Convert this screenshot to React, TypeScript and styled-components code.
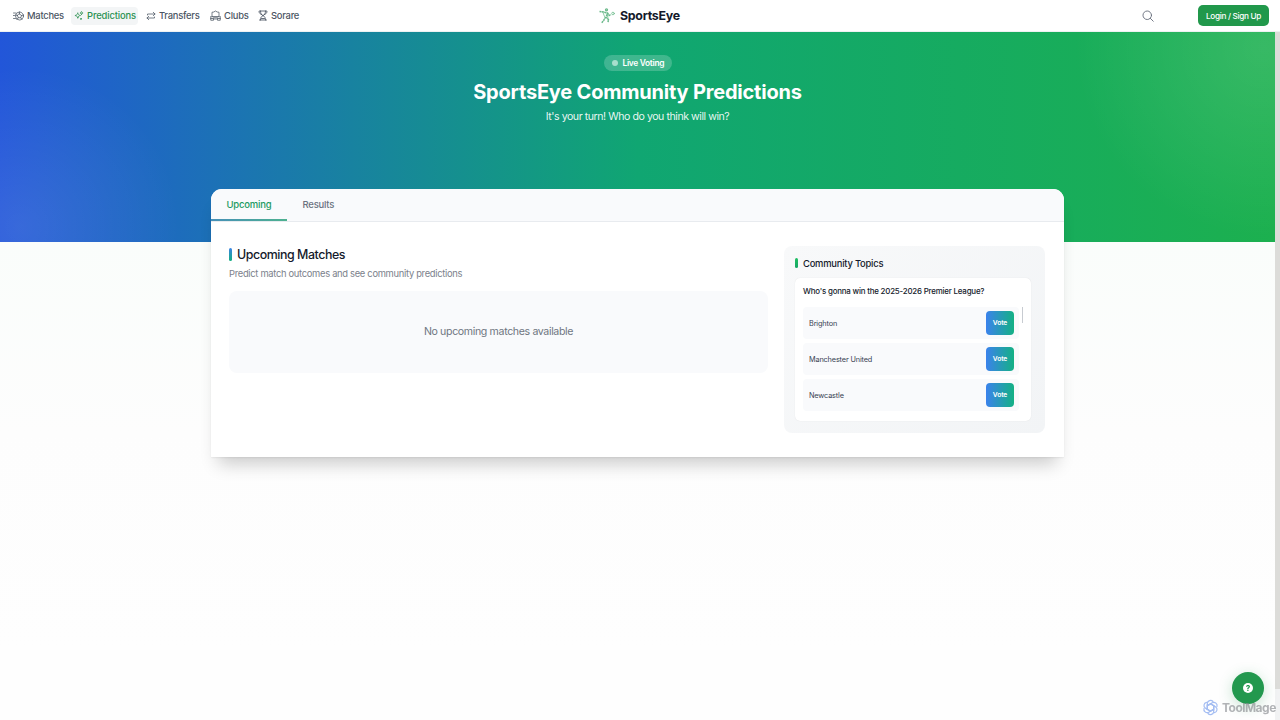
import React from 'react';
import styled, { createGlobalStyle } from 'styled-components';

const Global = createGlobalStyle`
  * { box-sizing: border-box; }
  body { margin: 0; overflow: hidden; font-family: Inter, "Liberation Sans", sans-serif; color: #141a2b; background: #fff; }
  button { font-family: inherit; border: 0; padding: 0; }
`;

const Page = styled.div`
  width: 1280px;
  height: 720px;
  display: flex;
  flex-direction: column;
  overflow: hidden;
`;

const Header = styled.header`
  height: 32px;
  flex: none;
  display: grid;
  grid-template-columns: 1fr auto 1fr;
  align-items: center;
  padding: 0 11px 0 10px;
  background: #fff;
  border-bottom: 1px solid #eef1f2;
`;

const Nav = styled.nav`
  display: flex;
  gap: 5px;
`;

const NavItem = styled.a<{ $active?: boolean; $w: number }>`
  width: ${p => p.$w}px;
  height: 18px;
  display: flex;
  align-items: center;
  gap: 3px;
  padding-left: 3px;
  border-radius: 4px;
  white-space: nowrap;
  font-size: 9.4px;
  font-weight: 450;
  letter-spacing: ${p => (p.$active ? -0.14 : -0.24)}px;
  color: ${p => (p.$active ? '#2a9150' : '#4b5563')};
  background: ${p => (p.$active ? '#f3f5f6' : 'transparent')};
`;

const Icon = styled.svg`
  flex: none;
  fill: none;
  stroke: currentColor;
  stroke-linecap: round;
  stroke-linejoin: round;
`;

const Brand = styled.div`
  display: flex;
  align-items: center;
  gap: 5px;
  font-size: 12.4px;
  font-weight: 700;
  letter-spacing: -0.28px;
  white-space: nowrap;
  width: 81px;
`;

const Actions = styled.div`
  display: flex;
  justify-content: flex-end;
  align-items: center;
  gap: 44px;
  color: #6b7280;
`;

const Login = styled.button`
  width: 71px;
  height: 21px;
  border-radius: 5px;
  background: #21984b;
  color: #fff;
  font-size: 8.2px;
  letter-spacing: -0.32px;
  font-weight: 500;
`;

const Body = styled.div`
  flex: 1;
  display: flex;
  min-height: 0;
`;

const Content = styled.main`
  width: 1275px;
  background: linear-gradient(#fafdfb 210px, #fdfdfd 400px, #fefefe 620px);
`;

const ScrollTrack = styled.div`
  width: 5px;
  background: #f1f2f3;
`;

const ScrollThumb = styled.div`
  height: 657px;
  background: #dcdcd9;
`;

const Hero = styled.section`
  height: 210px;
  display: flex;
  flex-direction: column;
  align-items: center;
  padding-top: 23px;
  color: #fff;
  background:
    radial-gradient(circle 160px at 20px 195px, rgba(255, 255, 255, 0.1), transparent),
    radial-gradient(circle 190px at 1265px 15px, rgba(255, 255, 255, 0.12), transparent),
    linear-gradient(90deg, #2256d9 0%, #10a672 50%, #1cb04f 100%);
`;

const Badge = styled.div`
  width: 68px;
  height: 16px;
  border-radius: 8px;
  padding-left: 8px;
  display: flex;
  align-items: center;
  gap: 5px;
  white-space: nowrap;
  background: rgba(255, 255, 255, 0.2);
  font-size: 8.4px;
  font-weight: 600;
  letter-spacing: -0.3px;
`;

const Dot = styled.span`
  width: 6px;
  height: 6px;
  border-radius: 50%;
  background: rgba(255, 255, 255, 0.55);
`;

const Title = styled.h1`
  margin: 8px 0 0;
  font-size: 20px;
  line-height: 26px;
  font-weight: 700;
  letter-spacing: -0.2px;
  white-space: nowrap;
`;

const Subtitle = styled.p`
  margin: 5px 0 0;
  font-size: 10.6px;
  line-height: 14px;
  letter-spacing: -0.45px;
  color: rgba(255, 255, 255, 0.92);
`;

const Card = styled.section`
  position: relative;
  width: 853px;
  height: 268px;
  margin: -53px 0 0 211px;
  border-radius: 11px 11px 0 0;
  background: #fff;
  box-shadow: 0 14px 18px -7px rgba(0, 0, 0, 0.2), 0 1px 2px rgba(0, 0, 0, 0.06);
`;

const Tabs = styled.div`
  height: 33px;
  display: flex;
  border-radius: 11px 11px 0 0;
  background: #f9fafc;
  border-bottom: 1px solid #e8ebef;
`;

const Tab = styled.div<{ $active?: boolean }>`
  height: 32px;
  width: ${p => (p.$active ? 76 : 63)}px;
  padding-left: 15.5px;
  font-size: 9.5px;
  font-weight: 450;
  line-height: 32px;
  letter-spacing: -0.22px;
  color: ${p => (p.$active ? '#1d9a62' : '#6b7280')};
  background: ${p => (p.$active ? 'linear-gradient(90deg, #4690b8, #4eb190) bottom / 100% 2px no-repeat' : 'none')};
`;

const Columns = styled.div`
  display: grid;
  grid-template-columns: 539px 261px;
  gap: 16px;
  align-items: start;
  padding: 24px 18px;
`;

const Heading = styled.h2<{ $small?: boolean }>`
  display: flex;
  align-items: center;
  gap: 5px;
  margin: 0;
  height: ${p => (p.$small ? 12 : 17)}px;
  font-size: ${p => (p.$small ? 9.4 : 12.4)}px;
  font-weight: 450;
  letter-spacing: ${p => (p.$small ? -0.22 : -0.44)}px;
  &::before {
    content: '';
    width: 3px;
    height: ${p => (p.$small ? 10 : 13)}px;
    border-radius: 2px;
    background: ${p => (p.$small ? 'linear-gradient(#1fbf61, #17a667)' : 'linear-gradient(#3b82e6, #12b081)')};
  }
`;

const Description = styled.p`
  margin: 4px 0 10px;
  font-size: 9.4px;
  line-height: 14px;
  letter-spacing: -0.31px;
  color: #7b818b;
`;

const Empty = styled.div`
  height: 82px;
  display: flex;
  align-items: center;
  justify-content: center;
  border-radius: 8px;
  background: #f9fafc;
  color: #6f7681;
  font-size: 10.6px;
  letter-spacing: -0.36px;
  padding-bottom: 1px;
`;

const Topics = styled.aside`
  height: 187px;
  border-radius: 8px;
  padding: 11px 14px 11px 11px;
  background: linear-gradient(135deg, #f8f9fa, #f2f4f6);
`;

const Poll = styled.div`
  height: 143px;
  margin-top: 9px;
  border-radius: 5px;
  padding: 6px 8px;
  background: #fff;
  box-shadow: 0 0 1px rgba(0, 0, 0, 0.12);
`;

const Question = styled.div`
  height: 23px;
  line-height: 14px;
  font-size: 7.9px;
  font-weight: 500;
  letter-spacing: -0.19px;
  white-space: nowrap;
`;

const PollBody = styled.div`
  display: flex;
  gap: 3px;
`;

const Options = styled.div`
  width: 216px;
  display: flex;
  flex-direction: column;
  gap: 4px;
`;

const Option = styled.div`
  height: 32px;
  display: flex;
  align-items: center;
  justify-content: space-between;
  border-radius: 4px;
  padding: 0 5px 0 6px;
  background: #f9fafc;
  color: #374151;
  font-size: 7.3px;
  letter-spacing: -0.14px;
`;

const Vote = styled.button`
  width: 28px;
  height: 24px;
  border-radius: 4px;
  background: linear-gradient(90deg, #3b82ec, #14b184);
  color: #fff;
  font-size: 6.7px;
  font-weight: 600;
  letter-spacing: -0.1px;
`;

const OptionScroll = styled.div`
  width: 1px;
  height: 16px;
  background: #c7cbd1;
`;

const Help = styled.button`
  position: fixed;
  left: 1232px;
  top: 672px;
  width: 32px;
  height: 32px;
  border-radius: 50%;
  display: flex;
  align-items: center;
  justify-content: center;
  background: #22984e;
  box-shadow: 0 3px 14px rgba(34, 152, 78, 0.25);
`;

const HelpMark = styled.span`
  width: 10px;
  height: 10px;
  border-radius: 50%;
  background: #fff;
  color: #22984e;
  font-size: 8px;
  font-weight: 800;
  line-height: 10px;
`;

const Watermark = styled.div`
  position: fixed;
  left: 1202px;
  top: 698px;
  height: 18px;
  display: flex;
  align-items: center;
  gap: 3px;
  color: rgba(140, 143, 147, 0.68);
  font-size: 12px;
  font-weight: 700;
  letter-spacing: -0.52px;
  white-space: nowrap;
`;

const BallIcon = () => (
  <Icon width="11" height="10" viewBox="0 0 22 20" strokeWidth="1.500">
    <circle cx="13" cy="10" r="8" />
    <path d="M13 6l4 3-1.500 4.500h-5L9 9zM13 2v4M17 9l4-1M15.500 13.500l2.500 3M10.500 13.500L8 16.500M9 9L5 8M1 4h4M0 9h3M1 15h4" />
  </Icon>
);
const SparkIcon = () => (
  <Icon width="10" height="11" viewBox="0 0 24 24" strokeWidth="1.700">
    <path d="M9.800 15.900L9 18.750l-.8-2.850a4.500 4.500 0 0 0-3.100-3.100L2.250 12l2.850-.8a4.500 4.500 0 0 0 3.100-3.100L9 5.250l.8 2.850a4.500 4.500 0 0 0 3.100 3.100l2.850.8-2.850.8a4.500 4.500 0 0 0-3.100 3.100zM18.250 8.700L18 9.750l-.25-1.050a3.400 3.400 0 0 0-2.450-2.450L14.250 6l1.050-.25a3.400 3.400 0 0 0 2.450-2.450L18 2.250l.25 1.050a3.400 3.400 0 0 0 2.450 2.450L21.750 6l-1.050.25a3.400 3.400 0 0 0-2.450 2.450zM17 20.500l-.5 1.200-.5-1.200-1.200-.5 1.200-.5.5-1.200.5 1.200 1.200.5z" />
  </Icon>
);
const TransferIcon = () => (
  <Icon width="10" height="10" viewBox="0 0 20 20" strokeWidth="1.500">
    <path d="M3 8V6h15M14.500 2.500L18 6l-3.500 3.500M17 12v2H2M5.500 10.500L2 14l3.500 3.500" />
  </Icon>
);
const ClubIcon = () => (
  <Icon width="11" height="11" viewBox="0 0 22 22" strokeWidth="1.500">
    <path d="M4 14V4.500L7.500 4 11 2l3.500 2 3.500.5V14M4 13h14M1.500 13v7.500H7V18h8v2.500h5.500V13M1.500 17H7M15 17h5.500M7 15.500h8" />
  </Icon>
);
const SorareIcon = () => (
  <Icon width="10" height="11" viewBox="0 0 20 22" strokeWidth="1.700">
    <path d="M3 2h14M5 2c0 6 2 8 5 9 3-1 5-3 5-9M2 3c0 3 2 5 5 6M18 3c0 3-2 5-5 6M10 11c-4 2-5 5-5 9M10 11c4 2 5 5 5 9M3 20h14M7 17h6" />
  </Icon>
);
const RunnerIcon = () => (
  <Icon width="16" height="16" viewBox="0 0 32 32" strokeWidth="3" color="#6ab98a">
    <circle cx="15" cy="3.500" r="2" strokeWidth="2.500" />
    <path d="M1 7l8 1 8 2-3 9 5 4-1 6M13 18l-3 6-5 6M17 10l3 5 4-2" strokeDasharray="4 .8" strokeLinecap="butt" />
    <path d="M8 9l3 8M16 12l2 8" strokeWidth="1.500" />
    <circle cx="28" cy="11" r="2.600" strokeWidth="1.500" />
  </Icon>
);
const SearchIcon = () => (
  <Icon width="12" height="12" viewBox="0 0 24 24" strokeWidth="1.900">
    <circle cx="10.500" cy="10.500" r="8.500" />
    <path d="M16.700 16.700L22.500 22.500" />
  </Icon>
);
const KnotIcon = () => (
  <Icon width="17" height="17" viewBox="-12 -12 24 24" strokeWidth="1.700" color="#a4bdf2">
    {[0, 60, 120, 180, 240, 300].map(a => (
      <path key={a} transform={`rotate(${a})`} d="M-4.500 2.600V-5.500A4.600 4.600 0 0 1 3.500-8.500M-4.500-2.600L0-5.200l5.500 3.200" />
    ))}
  </Icon>
);

const teams = ['Brighton', 'Manchester United', 'Newcastle'];

export default function App() {
  return (
    <Page>
      <Global />
      <Header>
        <Nav>
          <NavItem $w={56}><BallIcon />Matches</NavItem>
          <NavItem $w={67} $active><SparkIcon />Predictions</NavItem>
          <NavItem $w={59}><TransferIcon />Transfers</NavItem>
          <NavItem $w={43}><ClubIcon />Clubs</NavItem>
          <NavItem $w={46}><SorareIcon />Sorare</NavItem>
        </Nav>
        <Brand><RunnerIcon />SportsEye</Brand>
        <Actions>
          <SearchIcon />
          <Login>Login / Sign Up</Login>
        </Actions>
      </Header>
      <Body>
        <Content>
          <Hero>
            <Badge><Dot />Live Voting</Badge>
            <Title>SportsEye Community Predictions</Title>
            <Subtitle>It's your turn! Who do you think will win?</Subtitle>
          </Hero>
          <Card>
            <Tabs>
              <Tab $active>Upcoming</Tab>
              <Tab>Results</Tab>
            </Tabs>
            <Columns>
              <div>
                <Heading>Upcoming Matches</Heading>
                <Description>Predict match outcomes and see community predictions</Description>
                <Empty>No upcoming matches available</Empty>
              </div>
              <Topics>
                <Heading $small>Community Topics</Heading>
                <Poll>
                  <Question>Who's gonna win the 2025-2026 Premier League?</Question>
                  <PollBody>
                    <Options>
                      {teams.map(t => (
                        <Option key={t}>{t}<Vote>Vote</Vote></Option>
                      ))}
                    </Options>
                    <OptionScroll />
                  </PollBody>
                </Poll>
              </Topics>
            </Columns>
          </Card>
        </Content>
        <ScrollTrack><ScrollThumb /></ScrollTrack>
      </Body>
      <Help><HelpMark>?</HelpMark></Help>
      <Watermark><KnotIcon />ToolMage</Watermark>
    </Page>
  );
}
